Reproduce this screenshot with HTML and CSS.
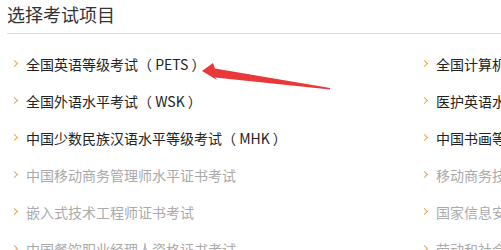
FILE: index.html
```html
<!DOCTYPE html>
<html>
    <head lang="zh-CN">
        <meta charset="UTF-8">
        <title>选择考试项目</title>
        <link rel="stylesheet" href="styles.css">
    </head>
    <body>
        <div id="container">
            <h2 class="title">选择考试项目</h2>
            <ul class="exam-list">
                <li class="on"><i class="arr"></i>全国英语等级考试（ PETS ）</li>
                <li class="on"><i class="arr"></i>全国外语水平考试（ WSK ）</li>
                <li class="on"><i class="arr"></i>中国少数民族汉语水平等级考试（ MHK ）</li>
                <li><i class="arr"></i>中国移动商务管理师水平证书考试</li>
                <li><i class="arr"></i>嵌入式技术工程师证书考试</li>
                <li><i class="arr"></i>中国餐饮职业经理人资格证书考试</li>
                <li class="on"><i class="arr"></i>全国计算机等级考试（ NCRE ）</li>
                <li class="on"><i class="arr"></i>医护英语水平考试（ METS ）</li>
                <li class="on"><i class="arr"></i>中国书画等级考试</li>
                <li><i class="arr"></i>移动商务技术认证考试</li>
                <li><i class="arr"></i>国家信息安全技术水平考试</li>
                <li><i class="arr"></i>劳动和社会保障部职业资格考试</li>
            </ul>
            <svg class="mark" width="501" height="250" viewBox="0 0 501 250">
                <polygon points="202,71 213,63 215,68.5 330,88 330,89.5 215,77.5 217,80" fill="#e8383a"/>
            </svg>
        </div>
    </body>
</html>
```

FILE: styles.css
```css
*{
    margin:0;
    padding:0;
}
ul{
    list-style:none;
}
html,body{
    background:#fff;
    overflow:hidden;
}
body{
    font-family:"Noto Sans CJK SC","Noto Sans",sans-serif;
}
#container{
    position:relative;
    width:900px;
    padding-top:2px;
}
.title{
    margin-left:7px;
    font-size:18px;
    font-weight:normal;
    line-height:24px;
    color:#333;
    padding-bottom:7px;
    border-bottom:1px solid #ddd;
}
.exam-list{
    display:grid;
    grid-template-columns:410px 410px;
    grid-template-rows:repeat(6,37px);
    grid-auto-flow:column;
    padding:11px 0 0 11px;
}
.exam-list li{
    display:flex;
    align-items:center;
    font-size:14px;
    color:#aaa;
    white-space:nowrap;
}
.exam-list li.on{
    color:#222;
}
.arr{
    width:4px;
    height:4px;
    border-top:1px solid #e9a64c;
    border-right:1px solid #e9a64c;
    transform:rotate(45deg);
    margin:0 9px 0 1px;
}
.mark{
    position:absolute;
    left:0;
    top:0;
}
```
